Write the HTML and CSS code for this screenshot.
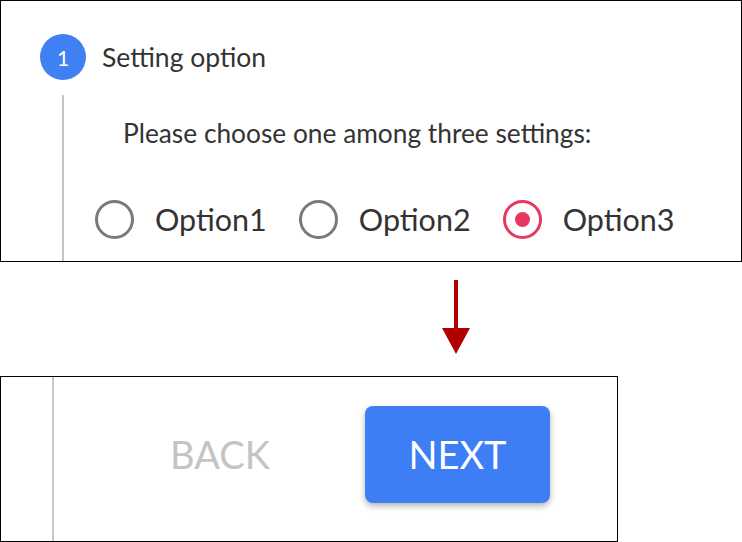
FILE: index.html
```html
<!DOCTYPE html>
<html>
<head>
<meta charset="utf-8">
<link rel="stylesheet" href="styles.css">
</head>
<body>
<div class="card top">
  <div class="step-head">
    <div class="step-num">1</div>
    <div class="step-title">Setting option</div>
  </div>
  <div class="step-body">
    <p class="prompt">Please choose one among three settings:</p>
    <div class="options">
      <label class="opt"><span class="radio"></span><span class="opt-label">Option1</span></label>
      <label class="opt"><span class="radio"></span><span class="opt-label">Option2</span></label>
      <label class="opt"><span class="radio checked"></span><span class="opt-label">Option3</span></label>
    </div>
  </div>
</div>
<div class="arrow-row">
  <svg class="arrow" width="30" height="74" viewBox="0 0 30 74">
    <rect x="13" y="0" width="4" height="52" fill="#b00000"/>
    <polygon points="1,48 29,48 15,74" fill="#b00000"/>
  </svg>
</div>
<div class="card bottom">
  <div class="actions">
    <button class="btn back">BACK</button>
    <button class="btn next">NEXT</button>
  </div>
</div>
</body>
</html>
```
FILE: styles.css
```css
html, body { margin: 0; padding: 0; background: #fff; }
body { font-family: Lato, "Open Sans", sans-serif; color: #333; width: 742px; height: 542px; overflow: hidden; }
.card { box-sizing: border-box; border: 1.5px solid #000; background: #fff; }
.top { width: 742px; height: 262px; padding-top: 33px; overflow: hidden; }
.step-head { display: flex; align-items: center; margin-left: 39px; height: 46px; }
.step-num { width: 46px; height: 46px; border-radius: 50%; background: #3f80f2; color: #fff; font-size: 21px; display: flex; align-items: center; justify-content: center; }
.step-title { margin-left: 16px; font-size: 26.5px; line-height: 30px; color: #333; }
.step-body { margin-left: 61px; margin-top: 15px; border-left: 2px solid #c4c4c4; padding-left: 59px; height: 200px; }
.prompt { margin: 0; padding-top: 23px; font-size: 26.3px; line-height: 30px; color: #333; }
.options { display: flex; margin-left: -28px; margin-top: 52px; gap: 32px; height: 38px; }
.opt { display: flex; align-items: center; }
.radio { box-sizing: border-box; width: 39px; height: 39px; border-radius: 50%; border: 3.5px solid #7a7a7a; display: flex; align-items: center; justify-content: center; flex: none; }
.radio.checked { border-color: #e5395f; }
.radio.checked::after { content: ""; width: 15px; height: 15px; border-radius: 50%; background: #e5395f; }
.opt-label { margin-left: 21px; font-size: 30.5px; line-height: 38px; color: #333; }
.arrow-row { height: 114px; padding-left: 441px; padding-top: 18px; box-sizing: border-box; }
.arrow { display: block; }
.bottom { width: 618px; height: 166px; padding-left: 51px; }
.actions { height: 100%; border-left: 2px solid #c8c8c8; display: flex; align-items: flex-start; padding-left: 91px; padding-top: 28.5px; box-sizing: border-box; gap: 70px; }
.btn { font-family: Lato, "Open Sans", sans-serif; font-size: 38px; border: 0; cursor: pointer; }
.back { background: transparent; color: #c4c4c4; width: 150px; height: 97px; padding: 0; }
.next { background: #3d7ef5; color: #fff; width: 185px; height: 97px; border-radius: 8px; box-shadow: 0 3px 6px rgba(0,0,0,0.3); padding: 0; }
```
